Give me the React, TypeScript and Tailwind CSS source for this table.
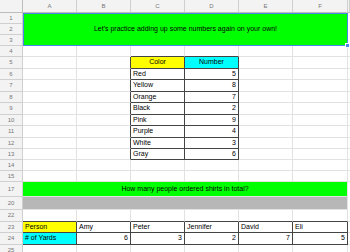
import React from "react";

type CellDef = {
  t?: string;
  bg?: string;
  num?: boolean;
  dr?: boolean;
  db?: boolean;
};

const widths = ["w-[54px]", "w-[54px]", "w-[54px]", "w-[54px]", "w-[54px]", "w-[55px]", "flex-1"];

function RowHead({ n, h }: { n: string; h: string }) {
  return (
    <div
      className={`${h} w-[23px] shrink-0 bg-[#f3f3f3] border-r border-b border-[#cfcfcf] text-[6px] text-[#777] flex items-center justify-center`}
    >
      {n}
    </div>
  );
}

function Row({ n, h, cells }: { n: string; h: string; cells: CellDef[] }) {
  return (
    <div className="flex">
      <RowHead n={n} h={h} />
      {widths.map((w, i) => {
        const c = cells[i] || {};
        return (
          <div
            key={i}
            className={[
              w,
              h,
              "shrink-0 border-r border-b border-[#e2e2e2] flex items-center px-[2px] overflow-hidden whitespace-nowrap text-[7px] text-black",
              c.bg || "bg-white",
              c.num ? "justify-end" : "justify-start",
              c.dr ? "border-r-[#444]" : "",
              c.db ? "border-b-[#444]" : "",
            ].join(" ")}
          >
            {c.t}
          </div>
        );
      })}
    </div>
  );
}

function Banner({
  rows,
  bg,
  text,
  selected,
}: {
  rows: { n: string; h: string }[];
  bg: string;
  text?: string;
  selected?: boolean;
}) {
  return (
    <div className="flex">
      <div className="flex flex-col">
        {rows.map((r) => (
          <RowHead key={r.n} n={r.n} h={r.h} />
        ))}
      </div>
      <div className="flex">
        <div
          className={`relative w-[325px] flex items-center justify-center text-[7px] text-black border-b ${bg} ${
            selected ? "border border-[#4a86e8]" : "border-r border-[#e2e2e2]"
          }`}
        >
          {text}
          {selected && (
            <div className="absolute right-[-3px] bottom-[-3px] w-[5px] h-[5px] bg-[#4a86e8] border border-white" />
          )}
        </div>
        <div className="flex-1 bg-white" />
      </div>
    </div>
  );
}

const colors: [string, string][] = [
  ["Red", "5"],
  ["Yellow", "8"],
  ["Orange", "7"],
  ["Black", "2"],
  ["Pink", "9"],
  ["Purple", "4"],
  ["White", "3"],
  ["Gray", "6"],
];
const colorHeights = ["h-[11px]", "h-[12px]", "h-[11px]", "h-[12px]", "h-[11px]", "h-[12px]", "h-[11px]", "h-[11px]"];

export default function App() {
  return (
    <div
      className="w-[350px] h-[252px] overflow-hidden bg-white"
      style={{ fontFamily: '"Liberation Sans", Arial, sans-serif' }}
    >
      <div className="flex h-[13px]">
        <div className="w-[23px] shrink-0 bg-[#f3f3f3] border-r border-b border-[#bdbdbd]" />
        {["A", "B", "C", "D", "E", "F", ""].map((l, i) => (
          <div
            key={i}
            className={`${widths[i]} shrink-0 bg-[#f3f3f3] border-r border-b border-[#cfcfcf] border-b-[#bdbdbd] text-[6px] text-[#777] flex items-center justify-center`}
          >
            {l}
          </div>
        ))}
      </div>

      <Banner
        rows={[
          { n: "1", h: "h-[11px]" },
          { n: "2", h: "h-[11px]" },
          { n: "3", h: "h-[11px]" },
        ]}
        bg="bg-[#00ff00]"
        text="Let's practice adding up some numbers again on your own!"
        selected
      />

      <Row n="4" h="h-[11px]" cells={[{}, {}, { db: true }, { db: true }]} />
      <Row
        n="5"
        h="h-[12px]"
        cells={[
          {},
          { dr: true },
          { t: "Color", bg: "bg-[#ffff00] justify-center!", dr: true, db: true },
          { t: "Number", bg: "bg-[#00ffff] justify-center!", dr: true, db: true },
        ]}
      />
      {colors.map(([c, v], i) => (
        <Row
          key={c}
          n={String(6 + i)}
          h={colorHeights[i]}
          cells={[{}, { dr: true }, { t: c, dr: true, db: true }, { t: v, num: true, dr: true, db: true }]}
        />
      ))}
      <Row n="14" h="h-[11px]" cells={[]} />
      <Row n="15" h="h-[11px]" cells={[]} />

      <Banner
        rows={[{ n: "17", h: "h-[15px]" }]}
        bg="bg-[#00ff00]"
        text="How many people ordered shirts in total?"
      />
      <Banner rows={[{ n: "20", h: "h-[13px]" }]} bg="bg-[#b7b7b7]" />

      <Row
        n="22"
        h="h-[12px]"
        cells={[{ db: true }, { db: true }, { db: true }, { db: true }, { db: true }, { db: true }]}
      />
      <Row
        n="23"
        h="h-[11px]"
        cells={[
          { t: "Person", bg: "bg-[#ffff00]", dr: true, db: true },
          { t: "Amy", dr: true, db: true },
          { t: "Peter", dr: true, db: true },
          { t: "Jennifer", dr: true, db: true },
          { t: "David", dr: true, db: true },
          { t: "Eli", dr: true, db: true },
        ]}
      />
      <Row
        n="24"
        h="h-[12px]"
        cells={[
          { t: "# of Yards", bg: "bg-[#00ffff]", dr: true, db: true },
          { t: "6", num: true, dr: true, db: true },
          { t: "3", num: true, dr: true, db: true },
          { t: "2", num: true, dr: true, db: true },
          { t: "7", num: true, dr: true, db: true },
          { t: "5", num: true, dr: true, db: true },
        ]}
      />
      <Row n="25" h="h-[11px]" cells={[]} />
    </div>
  );
}
